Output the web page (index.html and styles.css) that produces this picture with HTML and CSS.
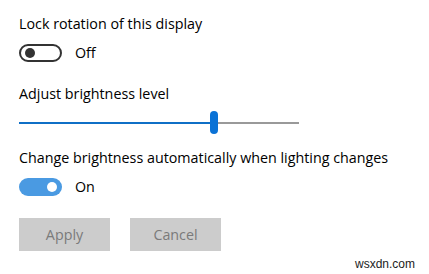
FILE: index.html
```html
<!DOCTYPE html>
<html>
<head>
<meta charset="utf-8">
<link rel="stylesheet" href="styles.css">
</head>
<body>
<div class="panel">
  <div class="label first">Lock rotation of this display</div>
  <div class="toggle-row">
    <span class="toggle off"><span class="knob"></span></span>
    <span class="state">Off</span>
  </div>
  <div class="label second">Adjust brightness level</div>
  <div class="slider">
    <div class="fill" style="width:191px"></div>
    <div class="thumb"></div>
    <div class="rest"></div>
  </div>
  <div class="label third">Change brightness automatically when lighting changes</div>
  <div class="toggle-row">
    <span class="toggle on"><span class="knob"></span></span>
    <span class="state">On</span>
  </div>
  <div class="buttons">
    <button class="btn">Apply</button>
    <button class="btn">Cancel</button>
  </div>
</div>
<div class="watermark">wsxdn.com</div>
</body>
</html>
```
FILE: styles.css
```css
html, body {
  margin: 0;
  padding: 0;
  background: #fff;
}
body {
  font-family: "Open Sans", "Noto Sans", sans-serif;
  font-size: 14.3px;
  color: #000;
  width: 429px;
  height: 274px;
  overflow: hidden;
  position: relative;
}
.panel {
  padding: 0 0 0 19px;
  display: flex;
  flex-direction: column;
  align-items: flex-start;
}
.label {
  line-height: 20px;
  height: 20px;
  white-space: nowrap;
}
.first { margin-top: 14px; }
.second { margin-top: 22px; }
.third { margin-top: 14px; }
.toggle-row {
  display: flex;
  align-items: center;
  margin-top: 10px;
  height: 18px;
}
.toggle {
  box-sizing: border-box;
  width: 43px;
  height: 18px;
  border-radius: 9px;
  display: flex;
  align-items: center;
}
.toggle.off {
  border: 2px solid #333;
  padding-left: 4px;
}
.toggle.on {
  background: #4a9ae2;
  justify-content: flex-end;
  padding-right: 5px;
}
.knob {
  width: 10px;
  height: 10px;
  border-radius: 50%;
}
.off .knob { background: #333; }
.on .knob { background: #fff; }
.state {
  margin-left: 13px;
  line-height: 18px;
}
.slider {
  display: flex;
  align-items: center;
  width: 280px;
  height: 23px;
  margin-top: 7px;
}
.fill {
  height: 2px;
  background: #0f6fc6;
}
.thumb {
  width: 8px;
  height: 23px;
  border-radius: 4px;
  background: #0a72d6;
  flex: none;
}
.rest {
  flex: 1;
  height: 2px;
  background: #999;
}
.buttons {
  display: flex;
  gap: 20px;
  margin-top: 22px;
}
.btn {
  width: 91px;
  height: 33px;
  border: 0;
  background: #ccc;
  color: #7a7a7a;
  font-family: "Open Sans", "Noto Sans", sans-serif;
  font-size: 14.3px;
  padding: 0;
}
.watermark {
  position: absolute;
  left: 355px;
  top: 257px;
  font-family: "Liberation Sans", sans-serif;
  font-size: 12px;
  color: #222;
}
```
